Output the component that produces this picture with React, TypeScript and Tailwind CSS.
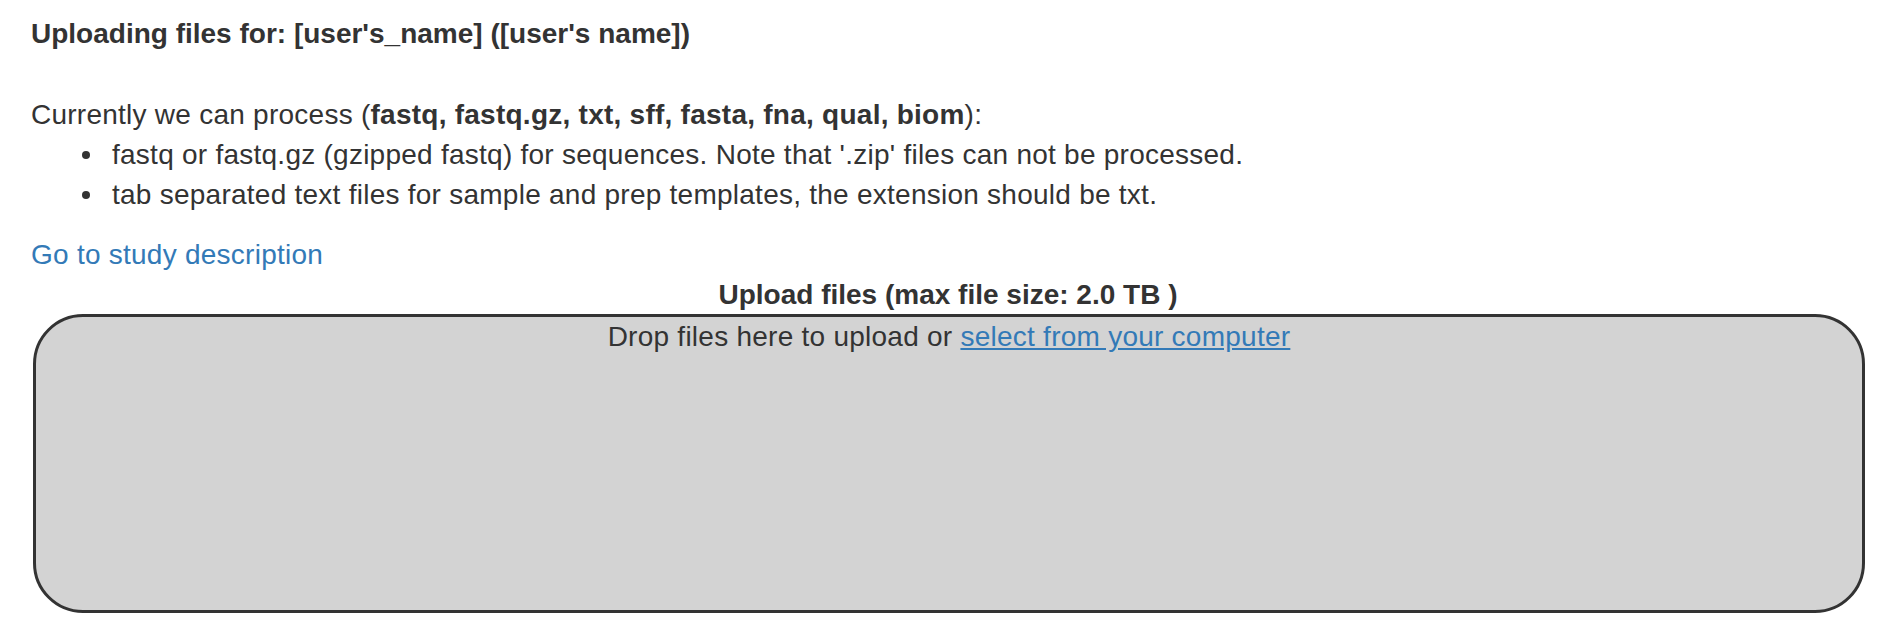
import React from "react";

function Bullet({ children }: { children: React.ReactNode }) {
  return (
    <li className="flex items-center">
      <span className="w-[8px] h-[8px] rounded-full bg-[#333333] mr-[22px] shrink-0" />
      <span>{children}</span>
    </li>
  );
}

export default function App() {
  return (
    <div
      className="w-[1896px] h-[640px] bg-white text-[#333333] text-[28px] leading-[40px] pl-[31px] pr-[31px] pt-[14px] tracking-[0.25px]"
      style={{ fontFamily: '"Liberation Sans", Arial, Helvetica, sans-serif' }}
    >
      <div className="font-bold tracking-normal">Uploading files for: [user's_name] ([user's name])</div>
      <div className="mt-[41px]">
        Currently we can process (<b>fastq, fastq.gz, txt, sff, fasta, fna, qual, biom</b>):
      </div>
      <ul className="list-none pl-[51px] mb-[20px]">
        <Bullet>fastq or fastq.gz (gzipped fastq) for sequences. Note that '.zip' files can not be processed.</Bullet>
        <Bullet>tab separated text files for sample and prep templates, the extension should be txt.</Bullet>
      </ul>
      <div>
        <a href="#" className="text-[#337ab7] no-underline">Go to study description</a>
      </div>
      <div className="font-bold text-center leading-[39px] tracking-normal">Upload files (max file size: 2.0 TB )</div>
      <div className="ml-[2px] w-[1832px] h-[299px] border-[3px] border-[#333333] rounded-[50px] bg-[#d3d3d3] text-center">
        Drop files here to upload or{" "}
        <a href="#" className="text-[#337ab7] underline">select from your computer</a>
      </div>
    </div>
  );
}
